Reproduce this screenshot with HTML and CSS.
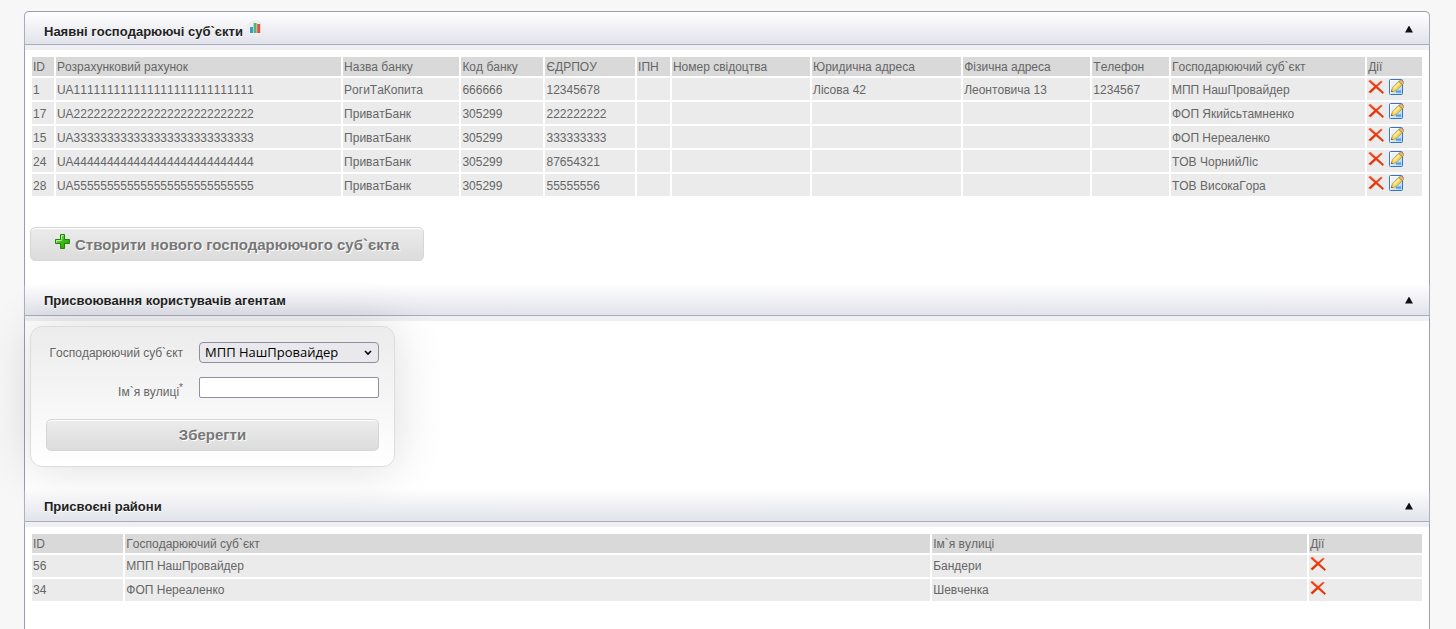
FILE: index.html
```
<!DOCTYPE html>
<html lang="uk">
	<head>
		<meta charset="UTF-8" />
		<title>Господарюючі суб`єкти</title>
		<link rel="stylesheet" href="styles.css">
	</head>
	<body>
<svg class="sprite" width="0" height="0">
  <defs>
    <linearGradient id="gRed" x1="0" y1="0" x2="0" y2="1">
      <stop offset="0" stop-color="#ff4a18" />
      <stop offset="1" stop-color="#d82800" />
    </linearGradient>
    <linearGradient id="gPage" x1="0" y1="0" x2="1" y2="1">
      <stop offset="0" stop-color="#ffffff" />
      <stop offset="1" stop-color="#a8d0f5" />
    </linearGradient>
    <linearGradient id="gPlus" x1="0" y1="0" x2="1" y2="1">
      <stop offset="0" stop-color="#9be884" />
      <stop offset="0.5" stop-color="#3fba1c" />
      <stop offset="1" stop-color="#1f9a04" />
    </linearGradient>
  </defs>
  <symbol id="delete" viewBox="0 0 16 16">
    <path d="M0.6 2.2 L2.2 1 L8.1 6.2 L13 2 L14.4 2.8 L9.4 7.4 L15.8 13.4 L14.8 14.8 L8 8.9 L2.6 14 L0.6 12.9 L6.4 7.5 Z" fill="url(#gRed)" stroke="#e63408" stroke-width="0.3" />
  </symbol>
  <symbol id="edit" viewBox="0 0 16 16">
    <rect x="1.5" y="0.5" width="13" height="15" rx="1" fill="url(#gPage)" stroke="#3a72c4" />
    <path d="M2.5 14.5v-13h8" fill="none" stroke="#fff" />
    <path d="M8 12.5h5" stroke="#3ba3ee" stroke-width="2" />
    <path d="M4.4 8.9 L10.6 2.6 L14.4 5.6 L7.8 11.8 L3.2 12.8 Z" fill="#f8d65a" stroke="#a87f30" stroke-width="0.7" />
    <path d="M5.8 9.4 L11.4 3.9" stroke="#fff3ae" stroke-width="1.4" />
    <path d="M10.6 2.6 L12.4 1 L15.8 2.6 L15.6 4.4 L14.4 5.6 Z" fill="#dfb874" stroke="#a47a3c" stroke-width="0.6" />
    <path d="M3.2 12.8 L3.6 11.2 L4.9 12.4 Z" fill="#3d3d3d" />
  </symbol>
  <symbol id="add" viewBox="0 0 16 16">
    <path d="M5.5 0.5h4v5h5v4h-5v5h-4v-5h-5v-4h5z" fill="url(#gPlus)" stroke="#1d8500" />
    <path d="M6.5 5.5v-4h2M1.5 8.5v-2h5" fill="none" stroke="#b4f0a2" />
  </symbol>
  <symbol id="chart" viewBox="0 0 16 16">
    <circle cx="8" cy="8" r="8" fill="#eeeeef" />
    <rect x="3" y="7" width="3" height="6" fill="#3c97d3" />
    <rect x="6.6" y="3" width="3" height="10" fill="#4fba6f" />
    <rect x="10.2" y="4" width="3" height="9" fill="#e64c3c" />
  </symbol>
</svg>

<main class="panel">
  <h3 class="title first">Наявні господарюючі суб`єкти
    <a href="#stats" aria-label="Статистика"><svg class="icon-chart"><use href="#chart" /></svg></a>
    <button type="button" class="toggle" aria-label="Згорнути"></button>
  </h3>
  <section class="content">
    <table class="agents">
      <colgroup>
        <col class="a-id"><col class="a-account"><col class="a-bank"><col class="a-code"><col class="a-edrpo"><col class="a-ipn">
        <col class="a-licence"><col class="a-juraddr"><col class="a-phisaddr"><col class="a-phone"><col class="a-name"><col class="a-act">
      </colgroup>
      <tr>
        <th>ID</th><th>Розрахунковий рахунок</th><th>Назва банку</th><th>Код банку</th><th>ЄДРПОУ</th><th>ІПН</th>
        <th>Номер свідоцтва</th><th>Юридична адреса</th><th>Фізична адреса</th><th>Телефон</th><th>Господарюючий суб`єкт</th><th>Дії</th>
      </tr>
      <tr>
        <td>1</td><td>UA111111111111111111111111111</td><td>РогиТаКопита</td><td>666666</td><td>12345678</td><td></td>
        <td></td><td>Лісова 42</td><td>Леонтовича 13</td><td>1234567</td><td>МПП НашПровайдер</td>
        <td class="act"><div class="actions"><a href="#delete" aria-label="Видалити"><svg><use href="#delete" /></svg></a><a href="#edit" aria-label="Редагувати"><svg><use href="#edit" /></svg></a></div></td>
      </tr>
      <tr>
        <td>17</td><td>UA222222222222222222222222222</td><td>ПриватБанк</td><td>305299</td><td>222222222</td><td></td>
        <td></td><td></td><td></td><td></td><td>ФОП Якийсьтамненко</td>
        <td class="act"><div class="actions"><a href="#delete" aria-label="Видалити"><svg><use href="#delete" /></svg></a><a href="#edit" aria-label="Редагувати"><svg><use href="#edit" /></svg></a></div></td>
      </tr>
      <tr>
        <td>15</td><td>UA333333333333333333333333333</td><td>ПриватБанк</td><td>305299</td><td>333333333</td><td></td>
        <td></td><td></td><td></td><td></td><td>ФОП Нереаленко</td>
        <td class="act"><div class="actions"><a href="#delete" aria-label="Видалити"><svg><use href="#delete" /></svg></a><a href="#edit" aria-label="Редагувати"><svg><use href="#edit" /></svg></a></div></td>
      </tr>
      <tr>
        <td>24</td><td>UA444444444444444444444444444</td><td>ПриватБанк</td><td>305299</td><td>87654321</td><td></td>
        <td></td><td></td><td></td><td></td><td>ТОВ ЧорнийЛіс</td>
        <td class="act"><div class="actions"><a href="#delete" aria-label="Видалити"><svg><use href="#delete" /></svg></a><a href="#edit" aria-label="Редагувати"><svg><use href="#edit" /></svg></a></div></td>
      </tr>
      <tr>
        <td>28</td><td>UA555555555555555555555555555</td><td>ПриватБанк</td><td>305299</td><td>55555556</td><td></td>
        <td></td><td></td><td></td><td></td><td>ТОВ ВисокаГора</td>
        <td class="act"><div class="actions"><a href="#delete" aria-label="Видалити"><svg><use href="#delete" /></svg></a><a href="#edit" aria-label="Редагувати"><svg><use href="#edit" /></svg></a></div></td>
      </tr>
    </table>
    <button type="button" class="button create"><svg class="icon-add"><use href="#add" /></svg>Створити нового господарюючого суб`єкта</button>
  </section>

  <h3 class="title">Присвоювання користувачів агентам
    <button type="button" class="toggle" aria-label="Згорнути"></button>
  </h3>
  <section class="content">
    <form class="assign">
      <label for="agent">Господарюючий суб`єкт</label>
      <select id="agent">
        <option>МПП НашПровайдер</option>
        <option>ФОП Якийсьтамненко</option>
        <option>ФОП Нереаленко</option>
        <option>ТОВ ЧорнийЛіс</option>
        <option>ТОВ ВисокаГора</option>
      </select>
      <label for="street" class="street">Ім`я вулиці<sup>*</sup></label>
      <input id="street" type="text" />
      <button type="submit" class="button save">Зберегти</button>
    </form>
  </section>

  <h3 class="title">Присвоєні райони
    <button type="button" class="toggle" aria-label="Згорнути"></button>
  </h3>
  <section class="content">
    <table class="streets">
      <colgroup>
        <col class="s-id"><col class="s-name"><col class="s-street"><col class="s-act">
      </colgroup>
      <tr><th>ID</th><th>Господарюючий суб`єкт</th><th>Ім`я вулиці</th><th>Дії</th></tr>
      <tr>
        <td>56</td><td>МПП НашПровайдер</td><td>Бандери</td>
        <td class="act"><div class="actions"><a href="#delete" aria-label="Видалити"><svg><use href="#delete" /></svg></a></div></td>
      </tr>
      <tr>
        <td>34</td><td>ФОП Нереаленко</td><td>Шевченка</td>
        <td class="act"><div class="actions"><a href="#delete" aria-label="Видалити"><svg><use href="#delete" /></svg></a></div></td>
      </tr>
    </table>
  </section>
</main>
	</body>
</html>
```
FILE: styles.css
```
* {
	box-sizing: border-box;
	margin: 0;
	padding: 0;
}

body {
	background-color: #f7f7f7;
	color: #666;
	font: 12px/18px "Liberation Sans", Arial, sans-serif;
	font-kerning: none;
	padding: 11px 26px 0 24px;
}

.sprite {
	position: absolute;
}

.panel {
	background-color: #fff;
	border: 1px solid #9a9db2;
	border-bottom: 0;
	border-radius: 5px 5px 0 0;
	min-height: calc(100vh - 11px);
}

.title {
	display: flex;
	align-items: center;
	height: 33px;
	padding: 4px 16px 0 19px;
	border-bottom: 1px solid #a9acbe;
	background: linear-gradient(rgba(226, 227, 235, 0), #e2e3eb);
	box-shadow: 0 5px 0 #f0f0f4, 0 2px 2px #d8d8de;
	color: #222;
	font-size: 13px;
	font-weight: bold;
	text-shadow: 0 1px 0 #fff;
}

.first {
	padding-top: 8px;
	border-radius: 4px 4px 0 0;
}

.icon-chart {
	display: block;
	width: 16px;
	height: 16px;
	margin: 0 0 8px 4px;
}

.toggle {
	width: 8px;
	height: 7px;
	margin: 0 0 2px auto;
	border: 0;
	background: #111;
	clip-path: polygon(50% 0, 100% 100%, 0 100%);
}

.first .toggle {
	margin-bottom: 6px;
}

.content {
	padding: 10px 5px 22px;
}

table {
	width: 100%;
	table-layout: fixed;
	border-spacing: 2px;
}

th,
td {
	padding: 1px;
	text-align: left;
	font-weight: normal;
	white-space: nowrap;
}

th {
	height: 19px;
	padding: 2px 1px 0;
	line-height: 17px;
	background-color: #d9d9d9;
}

td {
	height: 22px;
	line-height: 20px;
	background-color: #ebebeb;
}

.agents td {
	padding: 2px 1px 0;
}

.agents .act {
	padding: 1px;
}

.a-id { width: 1.6%; }
.a-account { width: 20.85%; }
.a-bank { width: 8.5%; }
.a-code { width: 6%; }
.a-edrpo { width: 6.55%; }
.a-ipn { width: 2.4%; }
.a-licence { width: 10.1%; }
.a-juraddr { width: 10.9%; }
.a-phisaddr { width: 9.3%; }
.a-phone { width: 5.6%; }
.a-name { width: 14.2%; }
.a-act { width: 4%; }

.s-id { width: 6.6%; }
.s-name { width: 58.15%; }
.s-street { width: 27.1%; }
.s-act { width: 8.15%; }

.actions {
	display: flex;
	gap: 4px;
	height: 20px;
}

.actions svg {
	display: block;
	width: 16px;
	height: 16px;
}

.button {
	border: 1px solid #d6d6d6;
	border-radius: 5px;
	background: linear-gradient(#ececec, #dcdcdc);
	box-shadow: inset 0 1px 0 #fff;
	color: #777;
	font: bold 15px/18px "Liberation Sans", Arial, sans-serif;
	text-shadow: 1px 1px 0 #fff;
}

.create {
	display: flex;
	align-items: center;
	height: 34px;
	margin-top: 29px;
	padding: 2px 24px 0;
}

.icon-add {
	width: 16px;
	height: 16px;
	margin: 0 4px 6px 0;
}

.assign {
	position: relative;
	display: grid;
	grid-template-columns: 137px 180px;
	gap: 14px 16px;
	width: 365px;
	padding: 15px;
	border: 1px solid #dcdcdc;
	border-radius: 12px;
	background: linear-gradient(#ececec, #fff);
	box-shadow: 0 0 50px rgba(0, 0, 0, 0.14);
}

.assign label {
	padding-top: 1px;
	line-height: 20px;
	text-align: right;
	white-space: nowrap;
}

.assign .street {
	padding-top: 5px;
}

.assign sup {
	font-size: 10px;
	line-height: 0;
}

.assign select,
.assign input {
	width: 180px;
	height: 21px;
	border: 1px solid #8f8f9d;
	background-color: #fff;
	font: 13px/18px "Open Sans", "Noto Sans", sans-serif;
}

.assign select {
	appearance: none;
	padding: 0 5px 1px;
	border-radius: 4px;
	background: #e9e9ed url("data:image/svg+xml,%3Csvg xmlns='http://www.w3.org/2000/svg' width='8' height='6'%3E%3Cpath d='M1 1l3 3 3-3' fill='none' stroke='%23000' stroke-width='1.6'/%3E%3C/svg%3E") no-repeat right 6px center;
	color: #000;
}

.assign input {
	border-radius: 2px;
	padding: 0 4px;
}

.save {
	grid-column: 1 / 3;
	height: 32px;
	margin-top: 3px;
}
```
